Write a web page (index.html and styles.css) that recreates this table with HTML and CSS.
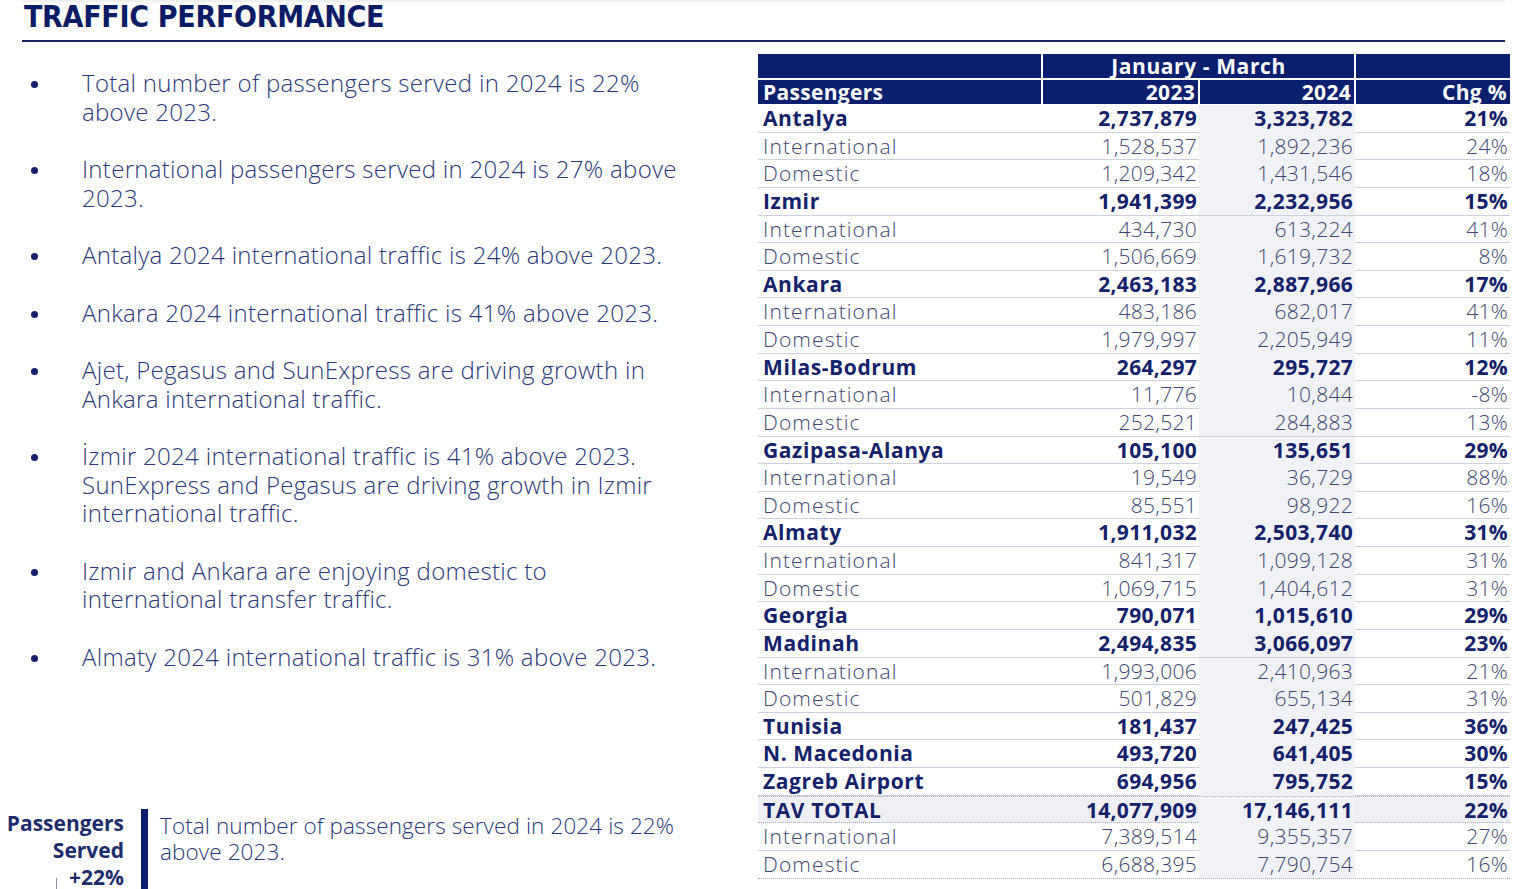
FILE: index.html
```html
<!DOCTYPE html>
<html lang="en">
<head>
<meta charset="utf-8">
<title>Traffic Performance</title>
<link rel="stylesheet" href="styles.css">
</head>
<body>
<header class="top">
  <h1 class="title">TRAFFIC PERFORMANCE</h1>
</header>
<main class="main">
  <section class="left">
    <ul class="bullets">
      <li>Total number of passengers served in 2024 is 22% above 2023.</li>
      <li>International passengers served in 2024 is 27% above 2023.</li>
      <li>Antalya 2024 international traffic is 24% above 2023.</li>
      <li>Ankara 2024 international traffic is 41% above 2023.</li>
      <li>Ajet, Pegasus and SunExpress are driving growth in Ankara international traffic.</li>
      <li>İzmir 2024 international traffic is 41% above 2023. SunExpress and Pegasus are driving growth in Izmir international traffic.</li>
      <li>Izmir and Ankara are enjoying domestic to international transfer traffic.</li>
      <li>Almaty 2024 international traffic is 31% above 2023.</li>
    </ul>
    <div class="summary">
      <div class="summary-label">Passengers<br>Served<br><span class="tick"></span>+22%</div>
      <div class="summary-bar"></div>
      <p class="summary-text">Total number of passengers served in 2024 is 22% above 2023.</p>
    </div>
  </section>
  <section class="right">
    <div class="thead">
      <div class="hc"></div>
      <div class="hc hc-span">January - March</div>
      <div class="hc"></div>
      <div class="hc hc-left">Passengers</div>
      <div class="hc">2023</div>
      <div class="hc">2024</div>
      <div class="hc">Chg %</div>
    </div>
    <div class="tbody">
      <div class="row b"><span>Antalya</span><span>2,737,879</span><span>3,323,782</span><span>21%</span></div>
      <div class="row"><span>International</span><span>1,528,537</span><span>1,892,236</span><span>24%</span></div>
      <div class="row"><span>Domestic</span><span>1,209,342</span><span>1,431,546</span><span>18%</span></div>
      <div class="row b"><span>Izmir</span><span>1,941,399</span><span>2,232,956</span><span>15%</span></div>
      <div class="row"><span>International</span><span>434,730</span><span>613,224</span><span>41%</span></div>
      <div class="row"><span>Domestic</span><span>1,506,669</span><span>1,619,732</span><span>8%</span></div>
      <div class="row b"><span>Ankara</span><span>2,463,183</span><span>2,887,966</span><span>17%</span></div>
      <div class="row"><span>International</span><span>483,186</span><span>682,017</span><span>41%</span></div>
      <div class="row"><span>Domestic</span><span>1,979,997</span><span>2,205,949</span><span>11%</span></div>
      <div class="row b"><span>Milas-Bodrum</span><span>264,297</span><span>295,727</span><span>12%</span></div>
      <div class="row"><span>International</span><span>11,776</span><span>10,844</span><span>-8%</span></div>
      <div class="row"><span>Domestic</span><span>252,521</span><span>284,883</span><span>13%</span></div>
      <div class="row b"><span>Gazipasa-Alanya</span><span>105,100</span><span>135,651</span><span>29%</span></div>
      <div class="row"><span>International</span><span>19,549</span><span>36,729</span><span>88%</span></div>
      <div class="row"><span>Domestic</span><span>85,551</span><span>98,922</span><span>16%</span></div>
      <div class="row b"><span>Almaty</span><span>1,911,032</span><span>2,503,740</span><span>31%</span></div>
      <div class="row"><span>International</span><span>841,317</span><span>1,099,128</span><span>31%</span></div>
      <div class="row"><span>Domestic</span><span>1,069,715</span><span>1,404,612</span><span>31%</span></div>
      <div class="row b"><span>Georgia</span><span>790,071</span><span>1,015,610</span><span>29%</span></div>
      <div class="row b"><span>Madinah</span><span>2,494,835</span><span>3,066,097</span><span>23%</span></div>
      <div class="row"><span>International</span><span>1,993,006</span><span>2,410,963</span><span>21%</span></div>
      <div class="row"><span>Domestic</span><span>501,829</span><span>655,134</span><span>31%</span></div>
      <div class="row b"><span>Tunisia</span><span>181,437</span><span>247,425</span><span>36%</span></div>
      <div class="row b"><span>N. Macedonia</span><span>493,720</span><span>641,405</span><span>30%</span></div>
      <div class="row b"><span>Zagreb Airport</span><span>694,956</span><span>795,752</span><span>15%</span></div>
      <div class="row b total"><span>TAV TOTAL</span><span>14,077,909</span><span>17,146,111</span><span>22%</span></div>
      <div class="row"><span>International</span><span>7,389,514</span><span>9,355,357</span><span>27%</span></div>
      <div class="row dotted"><span>Domestic</span><span>6,688,395</span><span>7,790,754</span><span>16%</span></div>
    </div>
  </section>
</main>
</body>
</html>
```
FILE: styles.css
```css
* { box-sizing: border-box; }

body {
  margin: 0;
  width: 1525px;
  height: 889px;
  overflow: hidden;
  background: #ffffff;
  font-family: "Open Sans", "DejaVu Sans", sans-serif;
  color: #2b3875;
}

.top {
  margin: 0 20px 0 22px;
  height: 42px;
  border-bottom: 2px solid #17245e;
  background: linear-gradient(#ececec, #ffffff 4px);
}

.title {
  margin: 0;
  padding-left: 2px;
  padding-top: 1px;
  font-family: "Liberation Sans Narrow", "DejaVu Sans Condensed", sans-serif;
  font-weight: 700;
  font-size: 30px;
  line-height: 32px;
  color: #0b1c66;
  letter-spacing: -0.3px;
}

.main {
  display: flex;
  height: 847px;
}

.left {
  width: 758px;
  display: flex;
  flex-direction: column;
}

.bullets {
  list-style: none;
  margin: 0;
  padding: 27px 0 0 82px;
  width: 686px;
}

.bullets li {
  position: relative;
  font-size: 24px;
  font-weight: 300;
  letter-spacing: 0.3px;
  line-height: 28.5px;
  margin-bottom: 29px;
  color: #2a3877;
}

.bullets li::before {
  content: "";
  position: absolute;
  left: -51px;
  top: 12px;
  width: 7px;
  height: 7px;
  border-radius: 50%;
  background: #14216a;
}

.summary {
  margin-top: auto;
  height: 80px;
  display: flex;
}

.summary-label {
  position: relative;
  width: 124px;
  padding-top: 1px;
  text-align: right;
  font-weight: 700;
  font-size: 21px;
  line-height: 27px;
  color: #1d2c6c;
}

.tick {
  position: absolute;
  left: 56px;
  bottom: 0;
  width: 1px;
  height: 11px;
  background: #8a90a8;
}

.summary-bar {
  width: 7px;
  margin-left: 17px;
  background: #0b1e6e;
}

.summary-text {
  margin: 4px 0 0 12px;
  width: 540px;
  font-size: 22.5px;
  font-weight: 300;
  letter-spacing: 0.1px;
  line-height: 26px;
  color: #2a3877;
}

.right {
  width: 752px;
  padding-top: 12px;
}

.thead {
  display: grid;
  grid-template-columns: 283px 155px 154px 154px;
  grid-template-rows: 24px 24px;
  gap: 2px;
  margin-bottom: 1px;
}

.hc {
  background: #0a1f6e;
  color: #ffffff;
  font-weight: 700;
  font-size: 21px;
  line-height: 25px;
  letter-spacing: 0.3px;
  text-align: right;
  padding-right: 3px;
  white-space: nowrap;
}

.hc-span {
  grid-column: span 2;
  text-align: center;
  padding-right: 0;
  letter-spacing: 0.6px;
}

.hc-left {
  text-align: left;
  padding-left: 5px;
}

.tbody {
  display: flex;
  flex-direction: column;
}

.row {
  display: grid;
  grid-template-columns: 284px 157px 156px 155px;
  height: 27.63px;
  border-bottom: 1px solid #cdd1dc;
  font-size: 21px;
  font-weight: 300;
  line-height: 27.6px;
  letter-spacing: 0.3px;
  color: #3d466f;
  white-space: nowrap;
}

.row span {
  text-align: right;
  padding-right: 2px;
}

.row span:first-child {
  text-align: left;
  padding-left: 5px;
  letter-spacing: 1.1px;
}

.row span:nth-child(3) {
  background: #f1f2f7;
}

.row.b {
  font-weight: 700;
  color: #13226a;
}

.row.b span:first-child {
  letter-spacing: 0.6px;
}

.row.total {
  background: #eef0f6;
  border-top: 1px dotted #a9adbb;
  border-bottom: 1px dotted #a9adbb;
}

.row.dotted {
  border-bottom: 1px dotted #a9adbb;
}
```
